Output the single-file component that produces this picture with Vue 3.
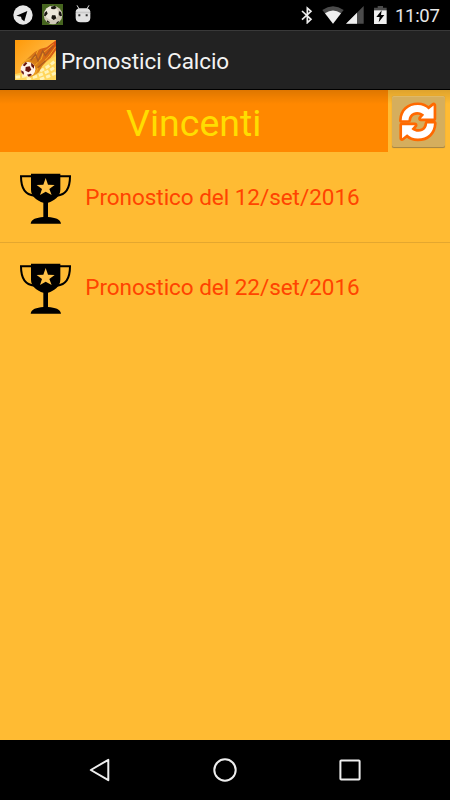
<script setup>
import { ref } from 'vue'

const pronostici = ref([
  { id: 1, data: '12/set/2016' },
  { id: 2, data: '22/set/2016' }
])
</script>

<template>
  <div class="screen">
    <div class="status-bar">
      <div class="status-left">
        <svg class="icon-telegram" viewBox="0 0 60 60">
          <circle cx="30" cy="30" r="29" fill="#e8e8e8" />
          <path d="M10 32 L43 18 L34 49 L26 43 L24 35 Z" fill="#000" />
        </svg>
        <svg class="icon-ball" viewBox="0 0 63 63">
          <rect width="63" height="63" fill="#46651f" />
          <circle cx="33" cy="33" r="28" fill="#d0c9b8" />
          <circle cx="29" cy="27" r="20" fill="#ebe7da" />
          <path d="M27 8 L39 5 L44 12 L37 16 L28 15 Z M8 26 L14 21 L17 29 L10 37 L6 35 Z M30 34 L40 34 L43 43 L35 48 L28 43 Z M51 22 L57 24 L60 35 L54 37 L50 31 Z M15 49 L22 53 L24 58 L15 54 Z M45 54 L52 50 L48 57 L41 60 Z" fill="#17150f" />
        </svg>
        <svg class="icon-android" viewBox="0 0 48 54">
          <path d="M6 1 L13 13 M42 1 L35 13" stroke="#dedede" stroke-width="3" />
          <path d="M2 21 Q3 10 15 10 H33 Q45 10 46 21 Z M2 24 H46 V39 Q45 52 32 52 H16 Q3 52 2 39 Z" fill="#e2e2e2" />
          <rect x="2" y="20" width="44" height="5" fill="#c9c9c9" />
          <path d="M10 28 h6 v6 h-6z M32 28 h6 v6 h-6z" fill="#333" />
        </svg>
      </div>
      <div class="status-right">
        <svg class="icon-bluetooth" viewBox="0 0 36 56">
          <path d="M3 15 L30 40 L19 50 V6 L30 16 L3 41" fill="none" stroke="#ededed" stroke-width="5" />
        </svg>
        <svg class="icon-wifi" viewBox="0 0 66 54">
          <path d="M1 12 Q33 -10 65 12 L33 53 Z" fill="#4b4b4b" />
          <path d="M9 22 Q33 5 57 22 L33 53 Z" fill="#f0f0f0" />
        </svg>
        <svg class="icon-signal" viewBox="0 0 53 53">
          <path d="M53 0 V53 H0 Z" fill="#4b4b4b" />
          <path d="M33 20 V53 H0 Z" fill="#f0f0f0" />
        </svg>
        <svg class="icon-battery" viewBox="0 0 38 55">
          <path d="M11 0 H27 V5 H38 V14 H0 V5 H11 Z" fill="#4b4b4b" />
          <rect y="13" width="38" height="42" fill="#f0f0f0" />
          <path d="M23 13 L7 33 H17 L14 49 L31 27 H21 Z" fill="#000" />
        </svg>
        <span class="clock">11:07</span>
      </div>
    </div>

    <div class="action-bar">
      <svg class="app-icon" viewBox="0 0 123 120">
        <defs>
          <linearGradient id="sky" x1="0" y1="0" x2="1" y2="1">
            <stop offset="0" stop-color="#ff9908" />
            <stop offset="0.5" stop-color="#ffb338" />
            <stop offset="1" stop-color="#ffe36d" />
          </linearGradient>
          <linearGradient id="flame" x1="0" y1="1" x2="1" y2="0">
            <stop offset="0" stop-color="#ffc929" />
            <stop offset="0.4" stop-color="#d67c18" />
            <stop offset="1" stop-color="#d64a12" />
          </linearGradient>
        </defs>
        <rect width="123" height="120" fill="url(#sky)" />
        <path d="M0 120 V103 Q64 88 123 48 V120 Z" fill="#ffd65b" />
        <path d="M2 112 Q75 105 121 62 M35 117 Q83 107 121 80 M75 118 Q104 109 122 98" stroke="#fff2b5" stroke-width="9" stroke-dasharray="13 6" fill="none" />
        <path d="M18 73 L45 49 L59 36 L77 26 L95 22 L123 1 V31 L107 53 L96 62 L82 78 L70 99 L45 113 Z" fill="url(#flame)" />
        <path d="M30 62 L60 51 L70 29 M60 76 L79 57 L85 38 L116 12 M61 100 L72 78 L100 51 L122 20" stroke="#f5a823" stroke-width="3" fill="none" />
        <path d="M47 61 L62 43 L69 63 L83 32 L91 47 L115 17 M68 83 L91 62" stroke="#ac5b20" stroke-width="4" fill="none" />
        <circle cx="39" cy="88" r="22" fill="#fff2e8" />
        <path d="M32 81 L44 79 L49 89 L41 97 L31 92 Z M23 76 L32 66 L37 70 L29 79 Z M48 68 L57 76 L57 86 L49 79 Z M18 91 L26 95 L27 104 L20 99 Z M36 104 L47 101 L51 105 L41 110 Z" fill="#68150e" />
      </svg>
      <span class="app-title">Pronostici Calcio</span>
    </div>

    <div class="content">
      <div class="header">
        <div class="header-title">Vincenti</div>
        <div class="header-action">
          <button class="refresh-btn">
            <svg viewBox="7 11 158 155">
              <defs>
                <path id="arrow" d="M36 83 C37 56 56 38 84 38 C97 38 108 43 116 51 L131 39 V78 H93 L103 67 C95 59 81 56 71 61 C61 65 57 73 56 83 Z" />
              </defs>
              <g class="refresh-outline">
                <use href="#arrow" />
                <use href="#arrow" transform="rotate(180 84 88)" />
              </g>
              <g fill="#fff">
                <use href="#arrow" />
                <use href="#arrow" transform="rotate(180 84 88)" />
              </g>
            </svg>
          </button>
        </div>
      </div>

      <div class="list">
        <div v-for="p in pronostici" :key="p.id" class="list-row">
          <svg class="trophy" viewBox="31 38 153 153">
            <path d="M66 48 H34 C34 80 45 104 74 106 M150 48 H181 C181 80 170 104 142 106" fill="none" stroke="#000" stroke-width="6" />
            <path d="M64 40 H152 V88 C152 108 134 121 115 127 V170 C137 172 152 176 154 190 H63 C65 176 80 172 101 170 V127 C82 121 64 108 64 88 Z" fill="#000" />
            <path d="M108 53 L115 73 L135 74 L119 86 L126 104 L108 94 L91 104 L97 86 L81 74 L101 73 Z" fill="#ffc247" />
          </svg>
          <span class="row-text">Pronostico del {{ p.data }}</span>
        </div>
      </div>
    </div>

    <div class="nav-bar">
      <svg viewBox="0 0 24 24">
        <path d="M2.8 12 L20.3 1.8 V22.2 Z" />
      </svg>
      <svg viewBox="0 0 24 24">
        <circle cx="12" cy="12" r="10.7" />
      </svg>
      <svg viewBox="0 0 24 24">
        <rect x="2.4" y="2.4" width="19.2" height="19.2" rx="0.8" />
      </svg>
    </div>
  </div>
</template>

<style>
body {
  margin: 0;
  background: #000;
}
</style>

<style scoped>
.screen {
  display: flex;
  flex-direction: column;
  width: 450px;
  height: 800px;
  overflow: hidden;
  font-family: Roboto, "Liberation Sans", sans-serif;
  background: #ffbb33;
}

svg {
  display: block;
  flex: none;
}

.status-bar {
  display: flex;
  justify-content: space-between;
  box-sizing: border-box;
  height: 30px;
  padding: 0 10px 0 12.5px;
  background: #000;
}

.status-left,
.status-right {
  display: flex;
  align-items: center;
}

.icon-telegram {
  width: 20px;
  height: 20px;
}

.icon-ball {
  width: 21px;
  height: 21px;
  margin: -1px 0 0 9.5px;
}

.icon-android {
  width: 16px;
  height: 18px;
  margin: -3px 0 0 11.5px;
}

.icon-bluetooth {
  width: 12px;
  height: 18.7px;
}

.icon-wifi {
  width: 22px;
  height: 18px;
  margin-left: 9.5px;
}

.icon-signal {
  width: 17.7px;
  height: 17.7px;
  margin-left: 2px;
}

.icon-battery {
  width: 12.7px;
  height: 18.3px;
  margin-left: 10px;
}

.clock {
  width: 45px;
  margin-left: 8.5px;
  padding-top: 1px;
  color: #e8e8e8;
  font-size: 18.5px;
  line-height: 32px;
  letter-spacing: -0.3px;
  white-space: nowrap;
}

.action-bar {
  display: flex;
  align-items: center;
  box-sizing: border-box;
  height: 60px;
  padding-left: 15px;
  background: #222;
  border-top: 1px solid #393939;
  border-bottom: 1px solid #000;
}

.app-icon {
  width: 41px;
  height: 40px;
}

.app-title {
  margin-left: 5px;
  padding-top: 2px;
  color: #f3f3f3;
  font-size: 22.5px;
  letter-spacing: -0.08px;
}

.content {
  flex: 1;
  background: linear-gradient(rgba(0, 0, 0, 0.13), transparent 14px), #ffbb33;
}

.header {
  display: flex;
  height: 62.5px;
}

.header-title {
  width: 387.5px;
  height: 62px;
  background: linear-gradient(rgba(0, 0, 0, 0.13), transparent 14px), #ff8800;
  color: #ffdd00;
  font-size: 37.5px;
  line-height: 66px;
  text-align: center;
}

.header-action {
  flex: 1;
  padding: 5.5px 0 0 4.5px;
}

.refresh-btn {
  display: block;
  width: 53px;
  height: 52px;
  padding: 0;
  border: 0;
  border-radius: 2px;
  background: #d5ae5d;
  box-shadow: inset 0 -1px 0 #a98743, inset 0 1px 0 #dfb968, 0 0 1px #b58a31;
}

.refresh-btn svg {
  width: 53px;
  height: 52px;
}

.refresh-outline {
  fill: #ff6900;
  stroke: #ff6900;
  stroke-width: 16;
  stroke-linejoin: round;
}

.list-row {
  display: flex;
  align-items: center;
  box-sizing: border-box;
  height: 90px;
  padding-left: 20.3px;
  border-bottom: 1px solid #e4a72f;
}

.list-row:last-child {
  border-bottom-color: transparent;
}

.trophy {
  width: 51px;
  height: 51px;
  margin-top: 2px;
}

.row-text {
  margin-left: 14px;
  color: #ff4400;
  font-size: 22.5px;
  letter-spacing: -0.04px;
}

.nav-bar {
  display: flex;
  justify-content: center;
  align-items: center;
  gap: 101px;
  height: 60px;
  background: #000;
}

.nav-bar svg {
  width: 24px;
  height: 24px;
  fill: none;
  stroke: #eee;
  stroke-width: 2;
  stroke-linejoin: round;
}
</style>
